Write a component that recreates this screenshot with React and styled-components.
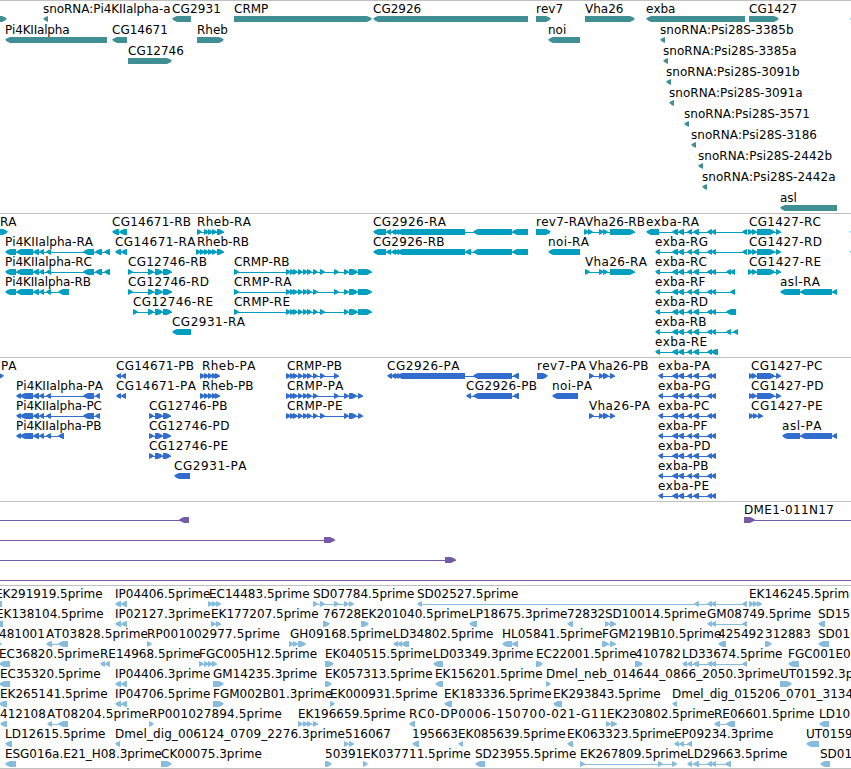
import React from "react";
import styled, { createGlobalStyle } from "styled-components";

const WIDTH = 851;

const EXBA = "672,678 678,684 687,692 693,699 707,711 711,715";
const CRMP = "287,291 291,295 294,298 298,303 304,308 307,312 313,318";
const PI4K = "33,39 39,44 46,51";
const CG2926 = "391,394 394,397 397,465";
const RHEB = "205,209 209,213 213,217";

// feature: [row, label, strand, exons, label x when it is not the first exon]
const tracks = [
  {
    name: "gene",
    color: "#408f95",
    height: 213,
    rowHeight: 21,
    features: [
      [0, "", ">", "-9,7"],
      [0, "snoRNA:Pi4KIIalpha-a", "<", "43,48"],
      [0, "CG2931", "<", "172,191"],
      [0, "CRMP", ">", "234,372"],
      [0, "CG2926", "<", "373,528"],
      [0, "rev7", ">", "536,551"],
      [0, "Vha26", ">", "585,635"],
      [0, "exba", "<", "646,745"],
      [0, "CG1427", ">", "749,779"],
      [0, "", "<", "850,870"],
      [1, "Pi4KIIalpha", "<", "5,107"],
      [1, "CG14671", "<", "112,127"],
      [1, "Rheb", ">", "197,224"],
      [1, "noi", "<", "548,580"],
      [1, "snoRNA:Psi28S-3385b", "<", "660,665"],
      [2, "CG12746", ">", "128,172"],
      [2, "snoRNA:Psi28S-3385a", "<", "663,668"],
      [3, "snoRNA:Psi28S-3091b", "<", "666,671"],
      [4, "snoRNA:Psi28S-3091a", "<", "669,674"],
      [5, "snoRNA:Psi28S-3571", "<", "684,689"],
      [6, "snoRNA:Psi28S-3186", "<", "691,696"],
      [7, "snoRNA:Psi28S-2442b", "<", "698,703"],
      [8, "snoRNA:Psi28S-2442a", "<", "702,707"],
      [9, "asl", "<", "780,837"]
    ]
  },
  {
    name: "mRNA",
    color: "#009ebf",
    height: 144,
    rowHeight: 20,
    features: [
      [0, "RA", ">", "-9,8", 0],
      [0, "CG14671-RB", "<", "112,119 119,127"],
      [0, "Rheb-RA", ">", `197,202 ${RHEB} 217,224`],
      [0, "CG2926-RA", "<", `373,386 386,391 ${CG2926} 473,512 512,528`],
      [0, "rev7-RA", ">", "536,551"],
      [0, "Vha26-RB", ">", "585,589 588,593 599,604 603,608 610,635"],
      [0, "exba-RA", "<", `646,659 ${EXBA} 742,747`],
      [0, "CG1427-RC", ">", "749,753 753,757 757,775 776,781"],
      [0, "", "<", "850,870"],
      [1, "Pi4KIIalpha-RA", "<", `5,16 16,33 ${PI4K} 83,94 95,102 104,110`],
      [1, "CG14671-RA", "<", "115,121 121,127"],
      [1, "Rheb-RB", ">", `197,201 201,205 ${RHEB} 217,224`],
      [1, "CG2926-RB", "<", `373,386 386,391 ${CG2926} 465,471 473,512 512,528`],
      [1, "noi-RA", "<", "548,580"],
      [1, "exba-RG", "<", `655,660 ${EXBA} 742,747`],
      [1, "CG1427-RD", ">", "749,753 753,757 757,775 776,781"],
      [1, "", "<", "850,870"],
      [2, "Pi4KIIalpha-RC", "<", `5,16 16,33 ${PI4K} 83,94 95,102 104,110`],
      [2, "CG12746-RB", ">", "128,133 148,154 155,163 163,172"],
      [2, "CRMP-RB", ">", `234,239 ${CRMP} 320,325 334,339 344,349 349,358 358,372`],
      [2, "Vha26-RA", ">", "585,590 599,604 603,608 610,635"],
      [2, "exba-RC", "<", `655,660 ${EXBA} 726,731 730,735`],
      [2, "CG1427-RE", ">", "749,753 753,757 757,775 776,781"],
      [3, "Pi4KIIalpha-RB", "<", `5,16 16,33 ${PI4K} 58,69`],
      [3, "CG12746-RD", ">", "128,133 148,154 155,163 163,172"],
      [3, "CRMP-RA", ">", `234,239 ${CRMP} 334,339 344,349 349,358 358,372`],
      [3, "exba-RF", "<", `655,660 ${EXBA} 730,735`],
      [3, "asl-RA", "<", "780,800 800,832 832,837"],
      [4, "CG12746-RE", ">", "133,138 148,154 155,163 163,172"],
      [4, "CRMP-RE", ">", `234,239 ${CRMP} 320,325 344,349 349,358 358,372`],
      [4, "exba-RD", "<", `655,660 ${EXBA} 726,736`],
      [5, "CG2931-RA", "<", "172,191"],
      [5, "exba-RB", "<", `655,660 ${EXBA} 726,731 733,738`],
      [6, "exba-RE", "<", `655,660 ${EXBA} 712,718`]
    ]
  },
  {
    name: "CDS",
    color: "#306dcc",
    height: 144,
    rowHeight: 20,
    features: [
      [0, "PA", ">", "-9,4", 1],
      [0, "CG14671-PB", "<", "116,121 121,126"],
      [0, "Rheb-PA", ">", `202,205 ${RHEB} 215,220`],
      [0, "CRMP-PB", ">", `${CRMP} 320,325 334,339`],
      [0, "CG2926-PA", "<", `387,391 ${CG2926} 473,512 513,519`],
      [0, "rev7-PA", ">", "537,548"],
      [0, "Vha26-PB", ">", "589,594 599,604 603,609 610,615"],
      [0, "exba-PA", "<", `658,663 ${EXBA}`],
      [0, "CG1427-PC", ">", "751,754 754,757 757,775 776,781"],
      [1, "Pi4KIIalpha-PA", "<", `16,21 20,33 ${PI4K} 83,94 95,100`],
      [1, "CG14671-PA", "<", "116,121 121,126"],
      [1, "Rheb-PB", ">", `202,205 ${RHEB} 215,220`],
      [1, "CRMP-PA", ">", `${CRMP} 334,339 344,349 349,357 358,363`],
      [1, "CG2926-PB", "<", "466,471 473,512 513,519"],
      [1, "noi-PA", "<", "552,578"],
      [1, "exba-PG", "<", `658,663 ${EXBA}`],
      [1, "CG1427-PD", ">", "751,754 754,757 757,775 776,781"],
      [2, "Pi4KIIalpha-PC", "<", `16,21 20,33 ${PI4K} 83,94 95,100`],
      [2, "CG12746-PB", ">", "149,154 155,163 163,171"],
      [2, "CRMP-PE", ">", `${CRMP} 320,325 344,349 349,357 358,363`],
      [2, "Vha26-PA", ">", "589,594 599,604 603,609 610,615"],
      [2, "exba-PC", "<", `658,663 ${EXBA}`],
      [2, "CG1427-PE", ">", "751,754 754,758 758,763"],
      [3, "Pi4KIIalpha-PB", "<", `16,21 20,33 ${PI4K} 58,64`],
      [3, "CG12746-PD", ">", "149,154 155,163 163,171"],
      [3, "exba-PF", "<", `658,663 ${EXBA}`],
      [3, "asl-PA", "<", "782,800 800,832 832,837"],
      [4, "CG12746-PE", ">", "149,154 155,163 163,171"],
      [4, "exba-PD", "<", `658,663 ${EXBA}`],
      [5, "CG2931-PA", "<", "174,190"],
      [5, "exba-PB", "<", `658,663 ${EXBA}`],
      [6, "exba-PE", "<", `658,663 ${EXBA}`]
    ]
  },
  {
    name: "BAC",
    color: "#755aa8",
    height: 84,
    rowHeight: 20,
    features: [
      [0, "", "<", "-20,-10 179,189"],
      [0, "DME1-011N17", ">", "744,755 860,870"],
      [1, "", ">", "-20,-10 324,335"],
      [2, "", ">", "-20,-10 445,456"],
      [3, "", ">", "-20,-10 860,870"]
    ]
  },
  {
    name: "EST",
    color: "#88bcdd",
    height: 183,
    rowHeight: 20,
    features: [
      [0, "EK291919.5prime", "<", "-9,2", -5],
      [0, "IP04406.5prime", "<", "115,121 121,127"],
      [0, "EC14483.5prime", ">", "209,213 213,217 216,221"],
      [0, "SD07784.5prime", ">", "313,318 320,325 334,339 344,349 349,354"],
      [0, "SD02527.5prime", "<", "417,422 694,699 707,711 711,715 742,747"],
      [0, "EK146245.5prim", ">", "749,754 754,758 757,762"],
      [1, "EK138104.5prime", "<", "-9,3", -4],
      [1, "IP02127.3prime", "<", "115,121 121,127"],
      [1, "EK177207.5prime", ">", "211,216 216,221"],
      [1, "76728", ">", "323,330"],
      [1, "EK201040.5prime", ">", "361,369"],
      [1, "LP18675.3prime", "<", "469,477"],
      [1, "72832", "<", "567,573"],
      [1, "SD10014.5prime", ">", "605,610 610,616"],
      [1, "GM08749.5prime", "<", "707,711 711,715 742,747"],
      [1, "SD15", "<", "818,825"],
      [2, "481001", ">", "-9,2", -1],
      [2, "AT03828.5prime", "<", "46,52 58,68"],
      [2, "RP001002977.5prime", ">", "147,152"],
      [2, "GH09168.5prime", ">", "290,294 294,298 298,306"],
      [2, "LD34802.5prime", "<", "393,398 397,402 401,409"],
      [2, "HL05841.5prime", "<", "502,512 512,518"],
      [2, "FGM219B10.5prime", ">", "602,609 610,616"],
      [2, "425492", "<", "718,726"],
      [2, "312883", ">", "765,772"],
      [2, "SD010", "<", "818,829"],
      [3, "EC36820.5prime", "<", "-1,10"],
      [3, "RE14968.5prime", "<", "100,105 105,110"],
      [3, "FGC005H12.5prime", ">", "199,204 205,209 209,213 212,217"],
      [3, "EK040515.5prime", ">", "325,334"],
      [3, "LD03349.3prime", "<", "433,443"],
      [3, "EC22001.5prime", ">", "536,543"],
      [3, "410782", ">", "635,643"],
      [3, "LD33674.5prime", "<", "682,687 687,692 693,699 707,711 711,715 742,747"],
      [3, "FGC001E0", "<", "788,799"],
      [4, "EC35320.5prime", "<", "-1,10", 0],
      [4, "IP04406.3prime", "<", "115,121 121,127"],
      [4, "GM14235.3prime", ">", "213,224"],
      [4, "EK057313.5prime", ">", "325,332"],
      [4, "EK156201.5prime", "<", "435,443"],
      [4, "Dmel_neb_014644_0866_2050.3prime", ">", "546,551"],
      [4, "UT01592.3p", ">", "780,792"],
      [5, "EK265141.5prime", "<", "-1,7", 0],
      [5, "IP04706.5prime", "<", "115,121 121,127"],
      [5, "FGM002B01.3prime", ">", "213,224"],
      [5, "EK000931.5prime", ">", "330,335"],
      [5, "EK183336.5prime", "<", "444,452"],
      [5, "EK293843.5prime", "<", "553,562"],
      [5, "Dmel_dig_015206_0701_3134", "<", "672,677"],
      [6, "412108", "<", "0,7"],
      [6, "AT08204.5prime", "<", "47,52 58,68"],
      [6, "RP001027894.5prime", ">", "149,154"],
      [6, "EK196659.5prime", ">", "298,303 304,308 307,312 313,318"],
      [6, "RC0-DP0006-150700-021-G11", "<", "409,415"],
      [6, "EK230802.5prime", ">", "607,611 611,617"],
      [6, "RE06601.5prime", "<", "714,720 726,735"],
      [6, "LD10", "<", "819,829"],
      [7, "LD12615.5prime", "<", "5,12"],
      [7, "Dmel_dig_006124_0709_2276.3prime", "<", "115,120"],
      [7, "516067", ">", "345,349 349,354"],
      [7, "195663", "<", "412,419"],
      [7, "EK085639.5prime", "<", "458,463"],
      [7, "EK063323.5prime", "<", "567,573"],
      [7, "EP09234.3prime", "<", "674,679 679,684 687,692"],
      [7, "UT0159", "<", "806,819"],
      [8, "ESG016a.E21_H08.3prime", "<", "5,16"],
      [8, "CK00075.3prime", ">", "161,172"],
      [8, "50391", ">", "325,332"],
      [8, "EK037711.5prime", ">", "363,368"],
      [8, "SD23955.5prime", "<", "475,485"],
      [8, "EK267809.5prime", ">", "580,585 658,663 672,677"],
      [8, "LD29663.5prime", "<", "687,692 693,699 707,711 711,715 725,731"],
      [8, "SD01", "<", "820,830"]
    ]
  }
];

// label widths; anything not listed keeps its natural width
const widths = {
  Pi4KIIalpha: 64.5,
  CG2931: 49,
  "snoRNA:Pi4KIIalpha-a": 127.5,
  "snoRNA:Psi28S-3385b": 133.5,
  "snoRNA:Psi28S-3385a": 133.5,
  "snoRNA:Psi28S-3091b": 133.5,
  "snoRNA:Psi28S-3091a": 133.5,
  "snoRNA:Psi28S-3571": 126,
  "snoRNA:Psi28S-3186": 126,
  "snoRNA:Psi28S-2442b": 134,
  "snoRNA:Psi28S-2442a": 133.5,
  "CG14671-RB": 79,
  "CG14671-RA": 80.5,
  "Rheb-RA": 54,
  "Rheb-RB": 52,
  "Pi4KIIalpha-RA": 88,
  "Pi4KIIalpha-RC": 87,
  "Pi4KIIalpha-RB": 86,
  "CG12746-RB": 79,
  "CG12746-RD": 81,
  "CG12746-RE": 80,
  "CG2931-RA": 73,
  "CRMP-RB": 55.5,
  "CRMP-RA": 57.5,
  "CRMP-RE": 56,
  "CG2926-RA": 73,
  "CG2926-RB": 71.5,
  "rev7-RA": 49.5,
  "noi-RA": 41,
  "Vha26-RB": 60,
  "Vha26-RA": 62,
  "exba-RA": 53,
  "exba-RG": 53,
  "exba-RC": 52,
  "exba-RF": 50.5,
  "exba-RD": 53,
  "exba-RB": 51.5,
  "exba-RE": 52,
  "CG1427-RC": 72,
  "CG1427-RD": 73,
  "CG1427-RE": 72,
  "asl-RA": 40,
  "CG14671-PB": 78,
  "CG14671-PA": 80,
  "Rheb-PA": 53.5,
  "Rheb-PB": 51.5,
  "Pi4KIIalpha-PA": 87,
  "Pi4KIIalpha-PC": 86,
  "Pi4KIIalpha-PB": 85.5,
  "CG12746-PB": 78.5,
  "CG12746-PD": 80.5,
  "CG12746-PE": 79,
  "CG2931-PA": 72.5,
  "CRMP-PB": 55,
  "CRMP-PA": 56.5,
  "CRMP-PE": 55.5,
  "CG2926-PA": 72.5,
  "CG2926-PB": 71,
  "rev7-PA": 49,
  "noi-PA": 40,
  "Vha26-PB": 59.5,
  "Vha26-PA": 61,
  "exba-PA": 52,
  "exba-PG": 52.5,
  "exba-PC": 51.5,
  "exba-PF": 49.5,
  "exba-PD": 52.5,
  "exba-PB": 50.5,
  "exba-PE": 51,
  "CG1427-PC": 71.5,
  "CG1427-PD": 72.5,
  "CG1427-PE": 71.5,
  "asl-PA": 39.5,
  "DME1-011N17": 90,
  "RC0-DP0006-150700-021-G11": 198,
  "AT03828.5prime": 102,
  "AT08204.5prime": 102,
  "RP001002977.5prime": 133,
  "RP001027894.5prime": 133,
  "ESG016a.E21_H08.3prime": 157,
  "Dmel_dig_006124_0709_2276.3prime": 230,
  "Dmel_neb_014644_0866_2050.3prime": 234
};

const parse = exons => exons.split(" ").map(e => e.split(",").map(Number));

// every exon is at least as long as its arrow head
const HEAD = 5;

const exonPath = ([x0, x1], strand, y) => {
  const left = strand === "<";
  const tip = left ? x0 : x1;
  const d = left ? 1 : -1;
  const back = left ? Math.max(x1, x0 + HEAD) : Math.min(x0, x1 - HEAD);
  return (
    `M${tip} ${y + 2.75}L${tip + 2 * d} ${y + 1.3}L${tip + HEAD * d} ${y}` +
    `H${back}V${y + 6}H${tip + HEAD * d}L${tip + 2 * d} ${y + 4.5}Z`
  );
};

const Track = ({ track }) => {
  const features = track.features.map(([row, label, strand, exons, labelX]) => {
    const list = parse(exons);
    return {
      label,
      strand,
      list,
      y: row * track.rowHeight,
      x: labelX === undefined ? list[0][0] : labelX
    };
  });

  return (
    <TrackPanel $height={track.height} aria-label={track.name}>
      <Glyphs $color={track.color} height={track.height - 1}>
        {features.map(({ list, strand, y }, i) => {
          const start = list[0][0];
          const end = list[list.length - 1][1];
          return (
            <g key={i}>
              {list.length > 1 && (
                <rect x={start + 1} y={y + 18} width={end - start - 1} height="1" />
              )}
              {list.map((exon, n) => (
                <path key={n} d={exonPath(exon, strand, y + 15)} />
              ))}
            </g>
          );
        })}
        {features
          .filter(f => f.label)
          .map((f, i) => (
            <Label key={i} x={f.x} y={f.y + 12} textLength={widths[f.label]}>
              {f.label}
            </Label>
          ))}
      </Glyphs>
    </TrackPanel>
  );
};

export default function App() {
  return (
    <Browser>
      <GlobalStyle />
      {tracks.map(track => (
        <Track key={track.name} track={track} />
      ))}
    </Browser>
  );
}

const GlobalStyle = createGlobalStyle`
  body {
    margin: 0;
    background: #fff;
  }
`;

const Browser = styled.main`
  display: flex;
  flex-direction: column;
  width: ${WIDTH}px;
  height: 769px;
  box-sizing: border-box;
  overflow: hidden;
  border-bottom: 1px solid #c0c0c0;
  background: #fff;
`;

const TrackPanel = styled.section`
  flex: none;
  box-sizing: border-box;
  height: ${props => props.$height}px;
  overflow: hidden;
  border-top: 1px solid #c0c0c0;
`;

const Glyphs = styled.svg`
  display: block;
  width: 100%;
  fill: ${props => props.$color};
`;

const Label = styled.text`
  fill: #000;
  font-family: "DejaVu Sans", sans-serif;
  font-size: 12px;
  font-kerning: none;
`;
